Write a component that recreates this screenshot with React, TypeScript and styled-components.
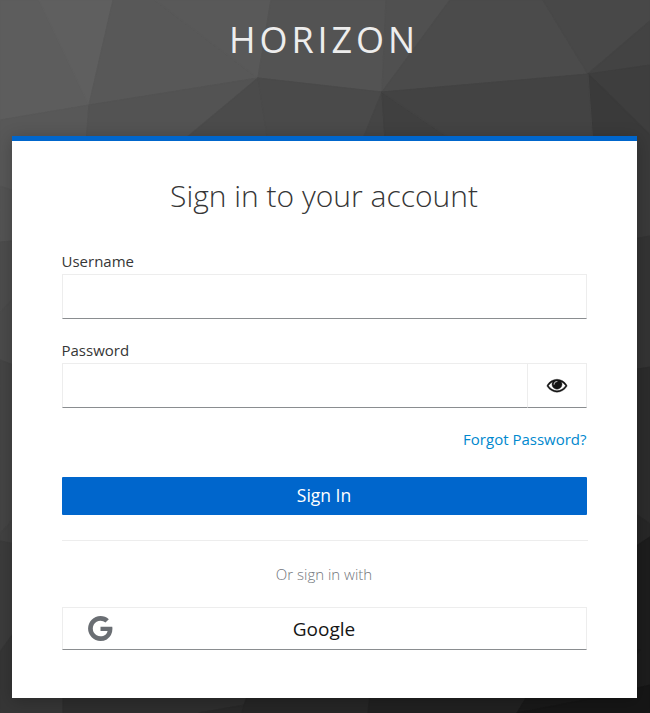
import React from "react";
import styled, { createGlobalStyle } from "styled-components";

const GlobalStyle = createGlobalStyle`
  *, *::before, *::after { box-sizing: border-box; }
  body {
    margin: 0;
    background: #2b2b2b;
    font-family: "Open Sans", "Noto Sans", sans-serif;
    color: #363636;
  }
  input, button { font-family: inherit; }
`;

const Page = styled.div`
  display: grid;
  grid-template: 713px / 650px;
  overflow: hidden;
`;

const Backdrop = styled.svg`
  grid-area: 1 / 1;
  display: block;
`;

const Content = styled.div`
  grid-area: 1 / 1;
  z-index: 1;
  display: flex;
  flex-direction: column;
  padding: 0 13.5px 0 11.5px;
`;

const Brand = styled.header`
  height: 136px;
  padding-top: 15px;
  text-align: center;
  font-size: 36px;
  line-height: 50px;
  letter-spacing: 3.9px;
  color: #ededed;
`;

const Card = styled.main`
  height: 562px;
  padding: 35px 50px 0;
  background: #fff;
  border-top: 5px solid #0066cc;
  box-shadow: 0 3px 16px rgba(0, 0, 0, 0.24);
`;

const Title = styled.h1`
  margin: 0 0 34px;
  height: 40px;
  line-height: 40px;
  text-align: center;
  font-size: 30px;
  font-weight: 300;
`;

const Field = styled.div`
  height: 89px;
`;

const Label = styled.label`
  display: block;
  height: 21px;
  line-height: 22px;
  margin-bottom: 3px;
  font-size: 15px;
`;

const InputGroup = styled.div`
  display: flex;
  height: 45px;
`;

const Input = styled.input`
  flex: 1;
  min-width: 0;
  padding: 0 12px;
  border: 1px solid #ededed;
  border-bottom-color: #8a8d90;
  border-radius: 0;
  background: #fff;
  font-size: 18px;
  outline: none;
`;

const RevealButton = styled.button`
  display: flex;
  align-items: center;
  justify-content: center;
  width: 60px;
  margin-left: -1px;
  padding: 0 0 1px;
  border: 1px solid #ededed;
  border-bottom-color: #8a8d90;
  background: #fff;
  color: #151515;
`;

const ForgotRow = styled.div`
  height: 49px;
  line-height: 22px;
  text-align: right;
  font-size: 15px;
`;

const Link = styled.a`
  color: #0088ce;
  text-decoration: none;
`;

const SubmitButton = styled.button`
  display: block;
  width: 100%;
  height: 38px;
  padding: 0 0 2px;
  border: 0;
  border-radius: 1px;
  background: #0066cc;
  color: #fff;
  font-size: 17.5px;
`;

const Divider = styled.hr`
  margin: 25px -1px 0 0;
  border: 0;
  border-top: 1px solid #ededed;
`;

const Alternative = styled.h2`
  margin: 22px 0;
  height: 22px;
  line-height: 22px;
  text-align: center;
  font-size: 15px;
  font-weight: 300;
  color: #72767b;
`;

const ProviderButton = styled.button`
  display: grid;
  grid-template-columns: 75px 1fr 75px;
  align-items: center;
  width: 100%;
  height: 43px;
  padding: 0;
  border: 1px solid #ededed;
  border-bottom-color: #8a8d90;
  background: #fff;
  color: #151515;
  font-size: 19px;
`;

const ProviderIcon = styled.span`
  display: flex;
  justify-content: center;
  padding-left: 1px;
  color: #6a6e73;
`;

const facets: [string, string][] = [
  ["0,0 39,0 89,105 0,120", "#5d5d5d"],
  ["39,0 113,0 89,105", "#5f5f5f"],
  ["113,0 155,0 258,78 89,105", "#585858"],
  ["155,0 271,0 258,78", "#595959"],
  ["271,0 386,0 382,92 258,78", "#535353"],
  ["386,0 450,0 382,92", "#505050"],
  ["450,0 543,0 588,74 382,92", "#4b4b4b"],
  ["543,0 650,0 650,21 588,74", "#484848"],
  ["588,74 650,21 650,65", "#434343"],
  ["588,74 650,65 650,135", "#3e3e3e"],
  ["588,74 650,135 650,236 600,245", "#3a3a3a"],
  ["0,120 89,105 80,220 0,186", "#585858"],
  ["89,105 258,78 70,235 80,220", "#535353"],
  ["258,78 280,220 70,235", "#4b4b4b"],
  ["258,78 382,92 330,220 280,220", "#4a4a4a"],
  ["382,92 390,220 330,220", "#454545"],
  ["382,92 570,220 390,220", "#404040"],
  ["382,92 588,74 600,245 570,220", "#434343"],
  ["0,186 70,210 70,236 0,242", "#545454"],
  ["0,242 70,236 0,313", "#4d4d4d"],
  ["0,313 70,236 70,386 0,360", "#4b4b4b"],
  ["0,360 70,386 70,456 0,534", "#454545"],
  ["0,534 70,456 70,555 0,541", "#424242"],
  ["0,541 70,555 0,652", "#3c3c3c"],
  ["0,652 70,555 63,698 63,713 0,713", "#363636"],
  ["600,245 650,236 650,367 600,375", "#343434"],
  ["600,375 650,367 650,524 600,490", "#2c2c2c"],
  ["600,490 650,524 650,537 600,570", "#272727"],
  ["600,570 650,537 650,685 600,697", "#1d1d1d"],
  ["63,650 265,650 244,705 199,713 63,713", "#2e2e2e"],
  ["199,713 244,705 242,713", "#292929"],
  ["265,650 375,650 368,713 242,713 244,705", "#262626"],
  ["375,650 550,650 526,698 517,713 368,713", "#212121"],
  ["550,650 640,650 600,697 517,713 526,698", "#191919"],
  ["517,713 600,697 650,685 650,713", "#161616"],
];

const PolygonBackdrop = () => (
  <Backdrop width="650" height="713" viewBox="0 0 650 713" aria-hidden="true">
    <rect width="650" height="713" fill="#303030" />
    {facets.map(([points, fill]) => (
      <polygon
        key={points}
        points={points}
        fill={fill}
        stroke={fill}
        strokeWidth="1.2"
        strokeLinejoin="round"
      />
    ))}
  </Backdrop>
);

const EyeIcon = () => (
  <svg
    width="20"
    height="20"
    viewBox="0 0 1792 1792"
    fill="currentColor"
    stroke="currentColor"
    strokeWidth="36"
    overflow="visible"
    aria-hidden="true"
  >
    <path d="M1664 960q-152-236-381-353 61 104 61 225 0 185-131.5 316.5t-316.5 131.5-316.5-131.5-131.5-316.5q0-121 61-225-229 117-381 353 133 205 333.5 326.5t434.5 121.5 434.5-121.5 333.5-326.5zm-720-384q0-20-14-34t-34-14q-125 0-214.5 89.5t-89.5 214.5q0 20 14 34t34 14 34-14 14-34q0-86 61-147t147-61q20 0 34-14t14-34zm848 384q0 34-20 69-140 230-376.5 368.5t-499.5 138.5-499.5-139-376.5-368q-20-35-20-69t20-69q140-229 376.5-368t499.5-139 499.5 139 376.5 368q20 35 20 69z" />
  </svg>
);

const GoogleIcon = () => (
  <svg width="29" height="29" viewBox="0 0 1792 1792" fill="currentColor" aria-hidden="true">
    <path d="M896 786h725q12 67 12 128 0 217-91 387.5t-259.5 266.5-386.5 96q-157 0-299-60.5t-245-163.5-163.5-245-60.5-299 60.5-299 163.5-245 245-163.5 299-60.5q300 0 515 201l-209 201q-123-119-306-119-129 0-238.5 65t-173.5 176.5-64 243.5 64 243.5 173.5 176.5 238.5 65q87 0 160-24t120-60 82-82 51.5-87 22.5-78h-436v-264z" />
  </svg>
);

export default function App() {
  return (
    <>
      <GlobalStyle />
      <Page>
        <PolygonBackdrop />
        <Content>
          <Brand>HORIZON</Brand>
          <Card>
            <Title>Sign in to your account</Title>
            <Field>
              <Label htmlFor="username">Username</Label>
              <InputGroup>
                <Input id="username" type="text" />
              </InputGroup>
            </Field>
            <Field>
              <Label htmlFor="password">Password</Label>
              <InputGroup>
                <Input id="password" type="password" />
                <RevealButton type="button" aria-label="Show password">
                  <EyeIcon />
                </RevealButton>
              </InputGroup>
            </Field>
            <ForgotRow>
              <Link href="#">Forgot Password?</Link>
            </ForgotRow>
            <SubmitButton type="submit">Sign In</SubmitButton>
            <Divider />
            <Alternative>Or sign in with</Alternative>
            <ProviderButton type="button">
              <ProviderIcon>
                <GoogleIcon />
              </ProviderIcon>
              <span>Google</span>
            </ProviderButton>
          </Card>
        </Content>
      </Page>
    </>
  );
}
